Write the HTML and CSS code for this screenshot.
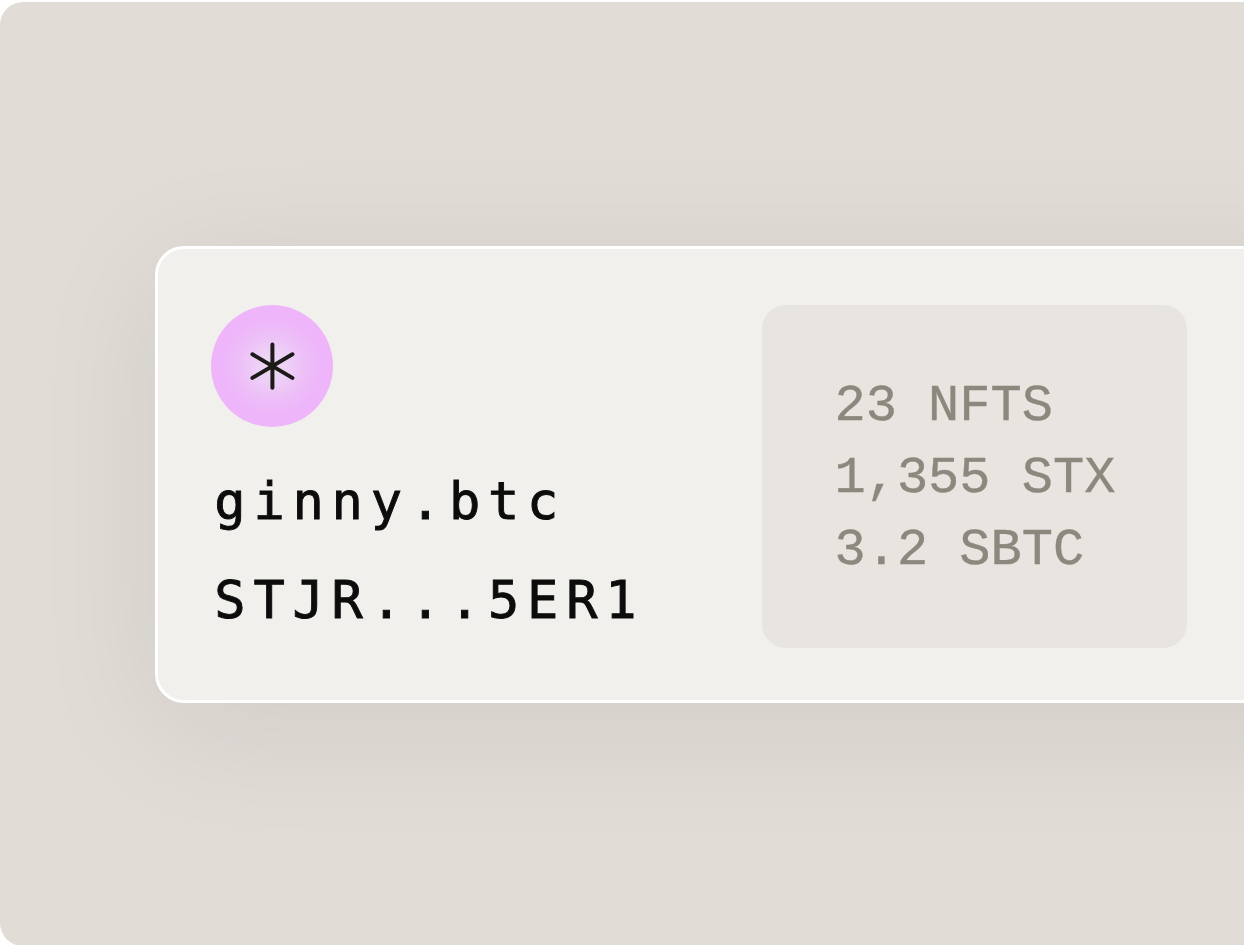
FILE: index.html
```html
<!DOCTYPE html>
<html lang="en">
<head>
<meta charset="utf-8">
<title>ginny.btc</title>
<link rel="stylesheet" href="styles.css">
</head>
<body>
<main class="stage">
  <section class="card">
    <div class="profile">
      <div class="avatar">
        <svg class="avatar-mark" viewBox="0 0 48 48" aria-hidden="true">
          <path d="M24.4 2.4V45.8M4.4 12.3L44.4 35.9M44.4 12.3L4.4 35.9"/>
        </svg>
      </div>
      <div class="identity">
        <div>ginny.btc</div>
        <div>STJR...5ER1</div>
      </div>
    </div>
    <div class="holdings">
      <div>23 NFTS</div>
      <div>1,355 STX</div>
      <div>3.2 SBTC</div>
    </div>
  </section>
</main>
</body>
</html>
```
FILE: styles.css
```css
* {
  box-sizing: border-box;
}

body {
  margin: 0;
  height: 945px;
  padding-top: 2px;
  background: #fff;
  overflow: hidden;
}

.stage {
  height: 944px;
  padding: 243.6px 0 0 154.5px;
  background: #e1dcd6;
  border-radius: 23px 0 0 23px;
  overflow: hidden;
}

.card {
  display: flex;
  width: 1300px;
  height: 457.4px;
  padding: 56.6px 0 0 53.8px;
  background: #f1f0ec;
  border: 3px solid #fff;
  border-radius: 29px;
  box-shadow: 0 23px 128px rgba(30, 20, 10, 0.08);
}

.profile {
  width: 550.7px;
  flex: none;
}

.avatar {
  display: flex;
  align-items: center;
  justify-content: center;
  width: 122px;
  height: 122px;
  border-radius: 50%;
  background: radial-gradient(circle at center, #eedaf4 0, #edd0f6 16px, #edbff8 33px, #eeb5fa 50px);
}

.avatar-mark {
  width: 48px;
  height: 48px;
  fill: none;
  stroke: #1c1b19;
  stroke-width: 4;
  stroke-linecap: round;
}

.identity {
  margin-top: 25px;
  margin-left: 3px;
  color: #0c0c0c;
  font: 52px/99px "DejaVu Sans Mono", monospace;
  letter-spacing: 7.79px;
  white-space: nowrap;
  -webkit-text-stroke: 0.9px #0c0c0c;
}

.holdings {
  flex: none;
  width: 425px;
  height: 343px;
  padding: 66px 0 0 72.5px;
  border-radius: 24px;
  background: #e8e5e0;
  color: #8c887d;
  font: 52px/72px "Liberation Mono", monospace;
  letter-spacing: 0;
  white-space: nowrap;
  -webkit-text-stroke: 0.4px #8c887d;
}
```
